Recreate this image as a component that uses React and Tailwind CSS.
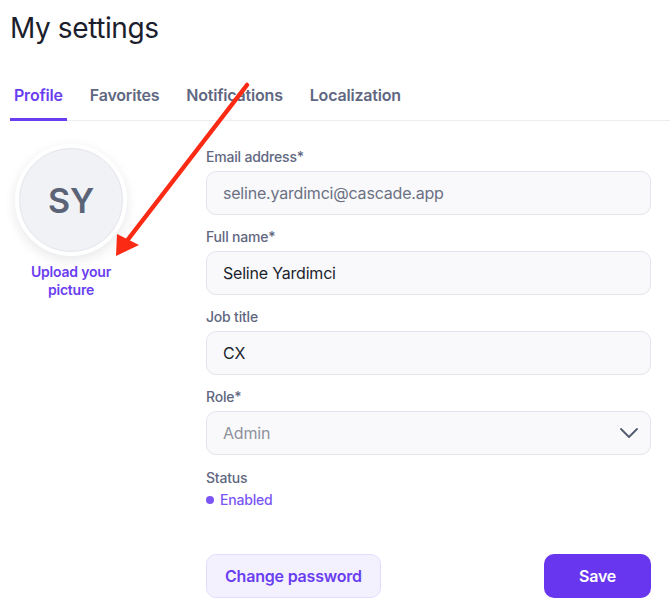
import React from "react";

const font = { fontFamily: "Inter, 'Noto Sans', sans-serif" };

function Field({ label, children }) {
  return (
    <div className="flex flex-col">
      <label className="text-[14px] leading-[20px] font-medium text-[#5f6781] mb-1">{label}</label>
      {children}
    </div>
  );
}

function Input({ value, muted }) {
  return (
    <div
      className={`h-[44px] rounded-[10px] border border-[#e3e5ec] bg-[#f9f9fb] flex items-center px-4 text-[16px] ${
        muted ? "text-[#6b7183]" : "text-[#1c1f2e]"
      }`}
    >
      {value}
    </div>
  );
}

export default function App() {
  return (
    <div className="relative w-[670px] h-[614px] bg-white overflow-hidden tracking-[-0.2px]" style={font}>
      <div className="pl-[10px] pt-[10px]">
        <h1 className="text-[28px] leading-[36px] font-normal text-[#1b1e2c] tracking-[-0.4px]">My settings</h1>
        <div className="mt-[39px] flex gap-[19px] border-b border-[#eceef2]">
          <div className="px-1 pb-[13px] text-[16px] leading-[20px] font-semibold text-[#6a3ef0] border-b-[3px] border-[#6a3ef0] -mb-px">
            Profile
          </div>
          <div className="px-1 pb-[13px] text-[16px] leading-[20px] font-semibold text-[#5f6781]">Favorites</div>
          <div className="px-1 pb-[13px] text-[16px] leading-[20px] font-semibold text-[#5f6781]">Notifications</div>
          <div className="px-1 pb-[13px] text-[16px] leading-[20px] font-semibold text-[#5f6781]">Localization</div>
        </div>
        <div className="flex pt-[26px]">
          <div className="w-[122px] flex flex-col items-center">
            <div className="w-[112px] h-[112px] rounded-full border-4 border-white bg-[#f1f2f6] shadow-[0_4px_12px_rgba(20,25,50,0.10)] flex items-center justify-center mt-[-3px]">
              <div className="w-[104px] h-[104px] rounded-full border border-[#e6e8ee] flex items-center justify-center text-[34px] font-semibold text-[#5b6377]">
                SY
              </div>
            </div>
            <div className="mt-[7px] text-center text-[14px] leading-[18px] font-semibold text-[#6a3ef0]">
              Upload your
              <br />
              picture
            </div>
          </div>
          <div className="ml-[74px] w-[445px] flex flex-col">
            <div className="flex flex-col gap-3">
              <Field label="Email address*">
                <Input value="seline.yardimci@cascade.app" muted />
              </Field>
              <Field label="Full name*">
                <Input value="Seline Yardimci" />
              </Field>
              <Field label="Job title">
                <Input value="CX" />
              </Field>
              <Field label="Role*">
                <div className="h-[44px] rounded-[10px] border border-[#e3e5ec] bg-[#f9f9fb] flex items-center justify-between px-4 text-[16px] text-[#8d919c]">
                  <span>Admin</span>
                  <svg width="18" height="10" viewBox="0 0 18 10" fill="none" className="mr-[-4px]">
                    <path d="M1 1l8 8 8-8" stroke="#525a6e" strokeWidth="1.8" strokeLinecap="round" strokeLinejoin="round" />
                  </svg>
                </div>
              </Field>
            </div>
            <div className="mt-[13px] text-[14px] leading-[20px] font-medium text-[#5f6781]">Status</div>
            <div className="mt-[2px] flex items-center gap-[6px] text-[14px] leading-[20px] font-medium text-[#7b55f3]">
              <span className="w-[8px] h-[8px] rounded-full bg-[#7b55f3]" />
              Enabled
            </div>
            <div className="mt-[44px] flex justify-between">
              <button className="h-[44px] px-[18px] rounded-[10px] border border-[#e4dcfe] bg-[#f4f1ff] text-[16px] font-semibold text-[#6a3ef0]">
                Change password
              </button>
              <button className="h-[44px] w-[107px] rounded-[10px] bg-[#6936ef] text-[16px] font-semibold text-white">
                Save
              </button>
            </div>
          </div>
        </div>
      </div>
      <svg className="absolute left-0 top-0 pointer-events-none" width="670" height="614" viewBox="0 0 670 614">
        <line x1="247" y1="85" x2="126" y2="242" stroke="#fb2a14" strokeWidth="4.5" strokeLinecap="round" />
        <polygon points="116,256 117,234 139,245" fill="#fb2a14" />
      </svg>
    </div>
  );
}
